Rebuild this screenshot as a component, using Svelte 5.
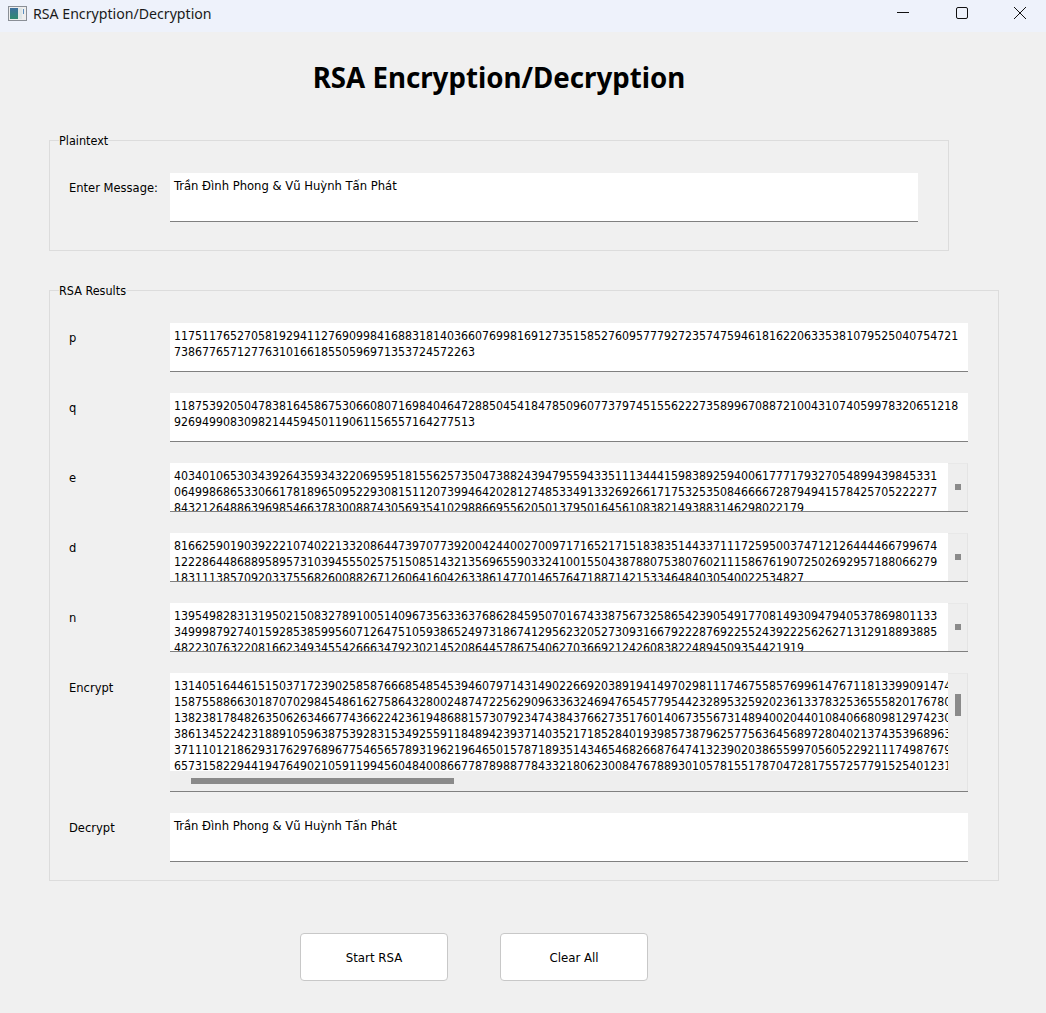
<script lang="ts">
  const message = "Trần Đình Phong & Vũ Huỳnh Tấn Phát";

  const rows = [
    {
      label: "p",
      lines: [
        "1175117652705819294112769099841688318140366076998169127351585276095777927235747594618162206335381079525040754721",
        "7386776571277631016618550596971353724572263",
      ],
    },
    {
      label: "q",
      lines: [
        "1187539205047838164586753066080716984046472885045418478509607737974515562227358996708872100431074059978320651218",
        "9269499083098214459450119061156557164277513",
      ],
    },
    {
      label: "e",
      vbar: "small",
      lines: [
        "4034010653034392643593432206959518155625735047388243947955943351113444159838925940061777179327054899439845331",
        "0649986865330661781896509522930815112073994642028127485334913326926617175325350846666728794941578425705222277",
        "843212648863969854663783008874305693541029886695562050137950164561083821493883146298022179",
      ],
    },
    {
      label: "d",
      vbar: "small",
      lines: [
        "8166259019039222107402213320864473970773920042440027009717165217151838351443371117259500374712126444466799674",
        "1222864486889589573103945550257515085143213569655903324100155043878807538076021115867619072502692957188066279",
        "183111385709203375568260088267126064160426338614770146576471887142153346484030540022534827",
      ],
    },
    {
      label: "n",
      vbar: "small",
      lines: [
        "1395498283131950215083278910051409673563363768628459507016743387567325865423905491770814930947940537869801133",
        "3499987927401592853859956071264751059386524973186741295623205273093166792228769225524392225626271312918893885",
        "482230763220816623493455426663479230214520864457867540627036692124260838224894509354421919",
      ],
    },
    {
      label: "Encrypt",
      vbar: "large",
      hbar: true,
      lines: [
        "13140516446151503717239025858766685485453946079714314902266920389194149702981117467558576996147671181339909147472",
        "15875588663018707029845486162758643280024874722562909633632469476545779544232895325920236133783253655582017678039",
        "13823817848263506263466774366224236194868815730792347438437662735176014067355673148940020440108406680981297423051",
        "38613452242318891059638753928315349255911848942393714035217185284019398573879625775636456897280402137435396896388",
        "37111012186293176297689677546565789319621964650157871893514346546826687647413239020386559970560522921117498767941",
        "65731582294419476490210591199456048400866778789887784332180623008476788930105781551787047281755725779152540123175",
      ],
    },
    { label: "Decrypt", words: true, lines: [message] },
  ];
</script>

<div class="window">
  <header class="titlebar">
    <svg class="app-icon" width="20" height="16" viewBox="0 0 20 16">
      <defs>
        <linearGradient id="shade" x1="0" y1="0" x2="0" y2="1">
          <stop offset="0" stop-color="#3d6f9e" />
          <stop offset="1" stop-color="#2f8a70" />
        </linearGradient>
      </defs>
      <rect x="0.5" y="0.5" width="18" height="14" fill="#eeeeee" stroke="#8a8f96" />
      <rect x="2" y="2" width="8" height="11" fill="url(#shade)" />
      <rect x="10" y="2" width="4" height="11" fill="#dfe6e6" />
      <rect x="15" y="3" width="1" height="5" fill="#5a8fc0" />
    </svg>
    <span class="app-name">RSA Encryption/Decryption</span>
    <div class="controls">
      <svg width="12" height="12" viewBox="0 0 12 12"><path d="M0 5.5h12" stroke="#111" fill="none" /></svg>
      <svg width="12" height="12" viewBox="0 0 12 12"><rect x="0.5" y="0.5" width="11" height="11" rx="1.5" stroke="#111" fill="none" /></svg>
      <svg width="12" height="12" viewBox="0 0 12 12"><path d="M0 0l12 12M12 0L0 12" stroke="#111" fill="none" /></svg>
    </div>
  </header>

  <main class="content">
    <h1>RSA Encryption/Decryption</h1>

    <fieldset class="plain">
      <legend>Plaintext</legend>
      <div class="row">
        <span class="label">Enter Message:</span>
        <div class="box"><div class="text words"><div>{message}</div></div></div>
      </div>
    </fieldset>

    <fieldset class="results">
      <legend>RSA Results</legend>
      {#each rows as row}
        <div class="row">
          <span class="label">{row.label}</span>
          <div class="box" class:tall={row.hbar}>
            <div class="body">
              <div class="text" class:words={row.words}>
                {#each row.lines as line}
                  <div>{line}</div>
                {/each}
              </div>
              {#if row.vbar}
                <div class="vbar">
                  <span class={row.vbar}></span>
                </div>
              {/if}
            </div>
            {#if row.hbar}
              <div class="hbar"><span></span></div>
            {/if}
          </div>
        </div>
      {/each}
    </fieldset>

    <div class="actions">
      <button>Start RSA</button>
      <button>Clear All</button>
    </div>
  </main>
</div>

<style>
  :global(body) {
    background: #f0f0f0;
  }
  .window {
    height: 1013px;
    overflow: hidden;
    background: #f0f0f0;
    color: #000;
    font-family: "DejaVu Sans Condensed", "DejaVu Sans", sans-serif;
    font-size: 12.8px;
  }

  .titlebar {
    display: flex;
    align-items: center;
    height: 32px;
    padding-left: 8px;
    background: #eef2fb;
  }
  .app-icon {
    margin-right: 5px;
    margin-top: -4px;
  }
  .app-name {
    font-family: "Noto Sans", sans-serif;
    font-size: 14.15px;
    color: #1a1a1a;
    margin-top: -5px;
  }
  .controls {
    display: flex;
    gap: 46.5px;
    margin-left: auto;
    margin-right: 20px;
    margin-top: -6px;
  }
  .controls svg {
    display: block;
  }

  .content {
    padding-left: 49px;
  }
  h1 {
    width: 900px;
    height: 40px;
    margin: 25px 0 35px;
    font-family: "Noto Sans", sans-serif;
    font-size: 27.7px;
    line-height: 40px;
    font-weight: 700;
    text-align: center;
  }

  fieldset {
    box-sizing: border-box;
    min-width: 0;
    margin: 0;
    padding: 25px 30px 18px 19px;
    border: 1px solid #dcdcdc;
  }
  legend {
    padding: 0;
    margin-left: -10px;
    font-size: 12.5px;
    line-height: 16px;
    transform: translateY(1px);
  }
  .plain {
    width: 900px;
    padding-bottom: 28px;
    margin-bottom: 31px;
  }
  .results {
    width: 950px;
  }

  .row {
    display: flex;
    margin-bottom: 21px;
  }
  .row:last-child {
    margin-bottom: 0;
  }
  .label {
    flex: 0 0 101px;
    line-height: 16px;
    padding-top: 7px;
  }

  .box {
    flex: 1;
    min-width: 0;
    display: flex;
    flex-direction: column;
    box-sizing: border-box;
    height: 49px;
    background: #fff;
    border-bottom: 1px solid #808080;
  }
  .box.tall {
    height: 119px;
  }
  .body {
    flex: 1;
    min-height: 0;
    display: flex;
  }
  .text {
    flex: 1;
    min-width: 0;
    overflow: hidden;
    padding: 5px 0 0 4px;
    font-size: 12.24px;
    line-height: 16px;
    white-space: pre;
  }
  .text.words {
    font-size: 12.9px;
  }

  .vbar {
    flex: 0 0 20px;
    display: flex;
    justify-content: center;
    box-sizing: border-box;
    background: #eeeeee;
    border-right: 1px solid #e4e4e4;
    border-top: 1px solid #e8e8e8;
  }
  .vbar span {
    width: 6px;
    background: #8a8a8a;
  }
  .vbar .small {
    height: 6px;
    margin-top: 20px;
  }
  .vbar .large {
    height: 22px;
    margin-top: 20px;
  }
  .hbar {
    height: 20px;
    display: flex;
    align-items: center;
    padding-left: 21px;
    background: #eeeeee;
    border-right: 1px solid #e4e4e4;
  }
  .hbar span {
    width: 263px;
    height: 6px;
    background: #8a8a8a;
  }

  .actions {
    display: flex;
    gap: 52px;
    margin: 52px 0 0 251px;
  }
  button {
    box-sizing: border-box;
    width: 148px;
    height: 48px;
    background: #fff;
    border: 1px solid #c8c8c8;
    border-radius: 4px;
    color: #000;
    font: inherit;
    font-size: 13.1px;
  }
</style>
